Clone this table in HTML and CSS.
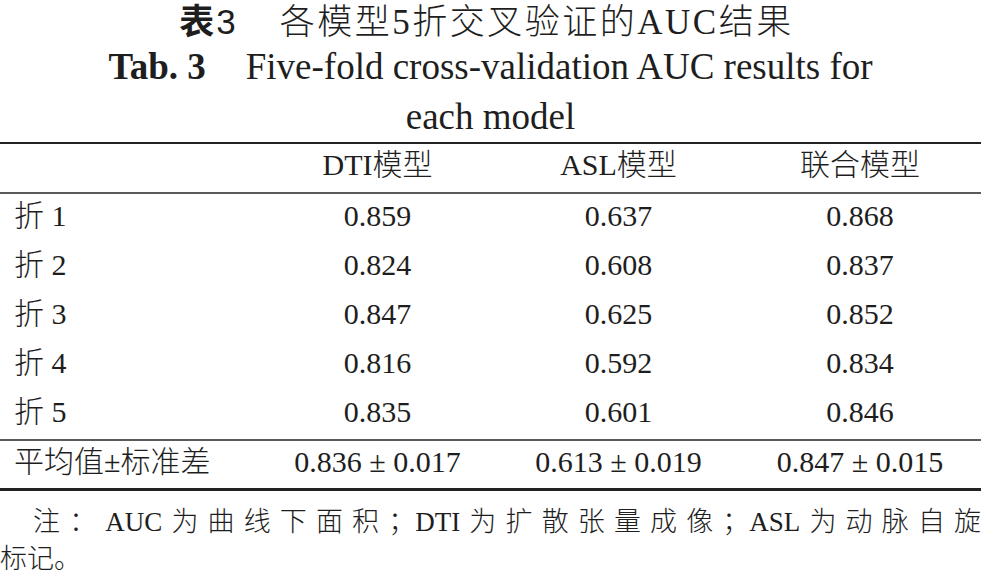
FILE: index.html
```html
<!DOCTYPE html>
<html lang="zh-CN">
<head>
<meta charset="utf-8">
<title>表3 各模型5折交叉验证的AUC结果</title>
<link rel="stylesheet" href="styles.css">
</head>
<body>
<div class="page">
  <div class="caption">
    <div class="cap-zh"><span class="cap-no"><span class="cap-no-zh">表</span>3</span><span class="cap-title">各模型5折交叉验证的AUC结果</span></div>
    <div class="cap-en"><b class="cap-en-no">Tab. 3</b><span class="cap-en-title">Five-fold cross-validation AUC results for<br>each model</span></div>
  </div>

  <div class="table">
    <div class="row head">
      <div class="cell first"></div>
      <div class="cell">DTI模型</div>
      <div class="cell">ASL模型</div>
      <div class="cell">联合模型</div>
    </div>
    <div class="body">
      <div class="row"><div class="cell first">折 1</div><div class="cell">0.859</div><div class="cell">0.637</div><div class="cell">0.868</div></div>
      <div class="row"><div class="cell first">折 2</div><div class="cell">0.824</div><div class="cell">0.608</div><div class="cell">0.837</div></div>
      <div class="row"><div class="cell first">折 3</div><div class="cell">0.847</div><div class="cell">0.625</div><div class="cell">0.852</div></div>
      <div class="row"><div class="cell first">折 4</div><div class="cell">0.816</div><div class="cell">0.592</div><div class="cell">0.834</div></div>
      <div class="row"><div class="cell first">折 5</div><div class="cell">0.835</div><div class="cell">0.601</div><div class="cell">0.846</div></div>
    </div>
    <div class="row mean">
      <div class="cell first">平均值±标准差</div>
      <div class="cell">0.836 ± 0.017</div>
      <div class="cell">0.613 ± 0.019</div>
      <div class="cell">0.847 ± 0.015</div>
    </div>
  </div>

  <div class="note"><span class="note-line">注<span class="punc">：</span>AUC为曲线下面积<span class="punc">；</span>DTI为扩散张量成像<span class="punc">；</span>ASL为动脉自旋</span><span class="note-end">标记。</span></div>
</div>
</body>
</html>
```

FILE: styles.css
```css
html, body {
  margin: 0;
  padding: 0;
  background: #ffffff;
}

body {
  color: #1e1e1e;
  font-family: "Liberation Serif", "Noto Sans CJK SC Light", "Noto Sans CJK SC DemiLight", "Noto Sans CJK SC", serif;
  font-weight: 300;
}

.page {
  width: 981px;
  overflow: hidden;
}

.caption {
  text-align: center;
}

.cap-zh {
  height: 42px;
  padding-top: 2px;
  font-size: 35px;
  line-height: 40px;
  letter-spacing: 2.5px;
  padding-right: 8px;
  box-sizing: border-box;
}

.cap-no {
  font-family: "Liberation Sans", "Noto Sans CJK SC", sans-serif;
  font-weight: 400;
  letter-spacing: 0;
  margin-right: 44px;
}

.cap-no-zh {
  font-weight: 700;
  margin-right: 2px;
}

.cap-en {
  font-size: 37px;
  line-height: 50px;
}

.cap-en-no {
  font-weight: 700;
  margin-right: 40px;
}

.table {
  border-top: 2.5px solid #222;
  border-bottom: 3px solid #222;
}

.row {
  display: grid;
  grid-template-columns: 257px 241px 241px 242px;
  align-items: center;
  font-size: 30px;
  line-height: 34px;
}

.head {
  height: 47.5px;
  border-bottom: 2px solid #5a5a5a;
}

.body {
  border-bottom: 2px solid #5a5a5a;
}

.body .row {
  height: 49.2px;
}

.mean {
  height: 47px;
}

.cell {
  text-align: center;
  white-space: nowrap;
  padding-bottom: 5px;
}

.cell.first {
  text-align: left;
  padding-left: 14px;
}

.note {
  margin-top: 10px;
  font-size: 27px;
  line-height: 37px;
}

.note-line {
  display: block;
  padding-left: 33px;
  text-align: justify;
  text-align-last: justify;
}

.note-end {
  display: block;
}

.punc {
  font-family: "Noto Sans CJK JP", sans-serif;
}
```
